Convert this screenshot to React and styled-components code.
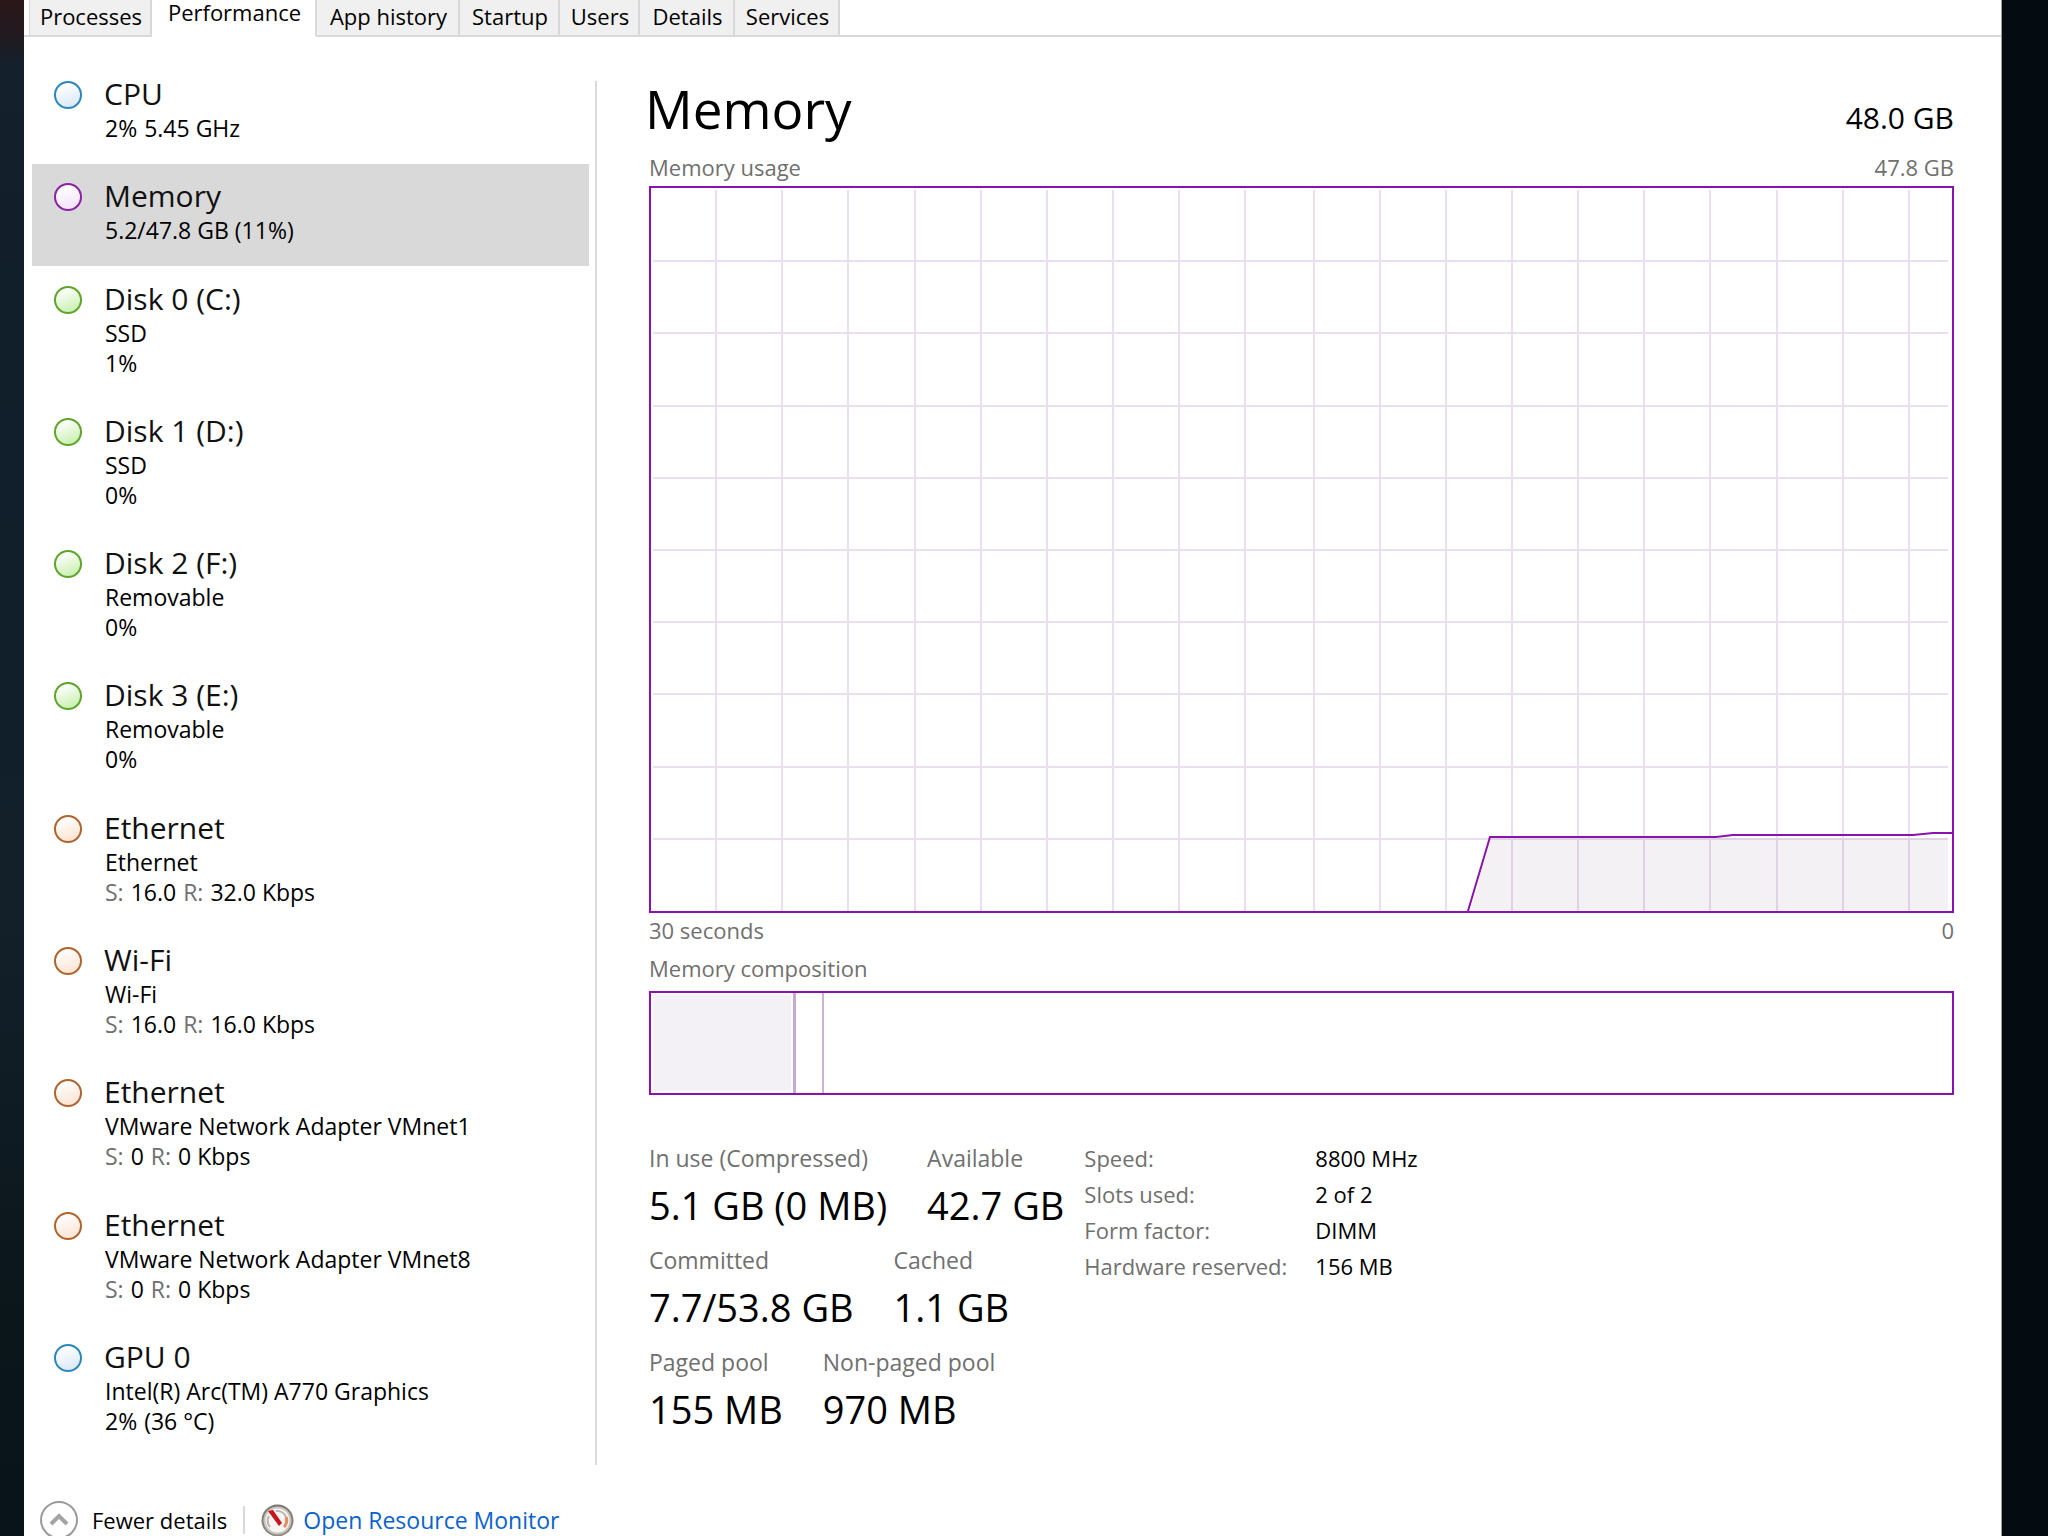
import React, { useState } from "react";
import styled, { createGlobalStyle } from "styled-components";

const GlobalStyle = createGlobalStyle`
  *, *::before, *::after { box-sizing: border-box; }
  body {
    margin: 0;
    font-family: "Open Sans", "Noto Sans", sans-serif;
    font-size: 23px;
    line-height: 30px;
    color: #000;
    background: #040c12;
  }
  button { font: inherit; color: inherit; border: 0; background: none; padding: 0; margin: 0; text-align: left; }
  h1, dl, dt, dd, p { margin: 0; font-weight: 400; }
`;

const PURPLE = "#8b12ae";

const Desktop = styled.div`
  min-height: 100vh;
  padding: 0 46px 0 24px;
  display: flex;
  overflow: hidden;
  background:
    linear-gradient(180deg, #2a1719 0, #221a20 34px, #14202b 64px, #101f2b 30%, #13202a 60%, #0b161b 85%, #08131a 100%) 0 0 / 24px 100% no-repeat,
    #040c12;
`;

const Window = styled.div`
  flex: 1;
  min-width: 0;
  display: flex;
  flex-direction: column;
  background: #fff;
  border-right: 1px solid #9a9d9f;
`;

const TabStrip = styled.div`
  height: 37px;
  padding-left: 5px;
  display: grid;
  grid-template-columns: 123px 165px 143px 100px 80px 95px 105px;
  align-items: start;
  flex: none;
  border-bottom: 2px solid #d9d9d9;
`;

const Tab = styled.button`
  display: flex;
  align-items: center;
  justify-content: center;
  white-space: nowrap;
  font-size: 22px;
  line-height: 24px;
  height: 36px;
  padding: 0 0 4px 2px;
  background: #f0f0f0;
  border-right: 2px solid #d9d9d9;
  border-bottom: 1px solid #d9d9d9;

  &:first-child {
    border-left: 1px solid #d9d9d9;
  }

  &[aria-selected="true"] {
    height: 37px;
    padding-bottom: 12px;
    background: #fff;
    border-bottom-color: #fff;
  }
`;

const Main = styled.div`
  flex: 1;
  display: flex;
  padding: 0 47px 0 8px;
`;

const DeviceList = styled.nav`
  flex: 0 0 557px;
  display: flex;
  flex-direction: column;
  justify-content: space-between;
  padding: 25px 0 8px;
`;

const DeviceItem = styled.button`
  display: flex;
  align-items: flex-start;
  gap: 22px;
  padding: 13px 22px 21px;
  background: ${(p) => (p.$selected ? "#d9d9d9" : "transparent")};
`;

const tones = {
  blue: ["#2b87bd", "#dbe9f6"],
  purple: ["#8e1fa8", "#f3e3f8"],
  green: ["#5da62b", "#c9f0b0"],
  orange: ["#b0642c", "#fbe4d3"],
};

const Dot = styled.span`
  flex: none;
  width: 28px;
  height: 28px;
  margin-top: 6px;
  border-radius: 50%;
  border: 2px solid ${(p) => tones[p.$tone][0]};
  background: linear-gradient(160deg, #fff 10%, ${(p) => tones[p.$tone][1]} 90%);
`;

const DeviceText = styled.span`
  display: flex;
  flex-direction: column;
`;

const DeviceName = styled.span`
  font-size: 30px;
  line-height: 38px;
  color: #111;
`;

const DeviceLine = styled.span`
  display: flex;
  gap: 7px;
  padding-left: 1px;
  white-space: nowrap;
`;

const Muted = styled.span`
  color: #707070;
`;

const Divider = styled.div`
  flex: 0 0 2px;
  margin: 44px 52px 0 6px;
  background: #dadada;
`;

const Panel = styled.main`
  flex: 1;
  min-width: 0;
  display: flex;
  flex-direction: column;
  padding: 40px 0 24px;
`;

const PanelHeader = styled.header`
  display: flex;
  justify-content: space-between;
  align-items: baseline;
  margin: 0 0 12px -4px;
`;

const PanelTitle = styled.h1`
  font-size: 53px;
  line-height: 64px;
`;

const Capacity = styled.span`
  font-size: 30px;
`;

const Caption = styled.div`
  display: flex;
  justify-content: space-between;
  margin: ${(p) => p.$margin};
  font-size: 22px;
  line-height: 28px;
  color: #707070;
`;

const ChartFrame = styled.div`
  flex: 1 0 400px;
  border: 2px solid ${PURPLE};
  display: flex;

  svg {
    flex: 1;
    width: 100%;
    height: auto;
    min-width: 0;
  }
`;

const Composition = styled.div`
  height: 104px;
  display: flex;
  border: 2px solid ${PURPLE};
`;

const InUseSegment = styled.div`
  padding: 2px;
  border-right: 3px solid #c7aad2;
  background: #f3f1f5 content-box;
`;

const ModifiedSegment = styled.div`
  flex: 0 0 28px;
  border-right: 2px solid #cdb3d6;
`;

const Details = styled.div`
  display: flex;
  align-items: flex-start;
  gap: 20px;
  margin-top: 48px;
`;

const Stats = styled.div`
  display: flex;
  flex-direction: column;
  gap: 8px;
`;

const StatRow = styled.dl`
  display: flex;
  gap: 40px;
`;

const StatLabel = styled.dt`
  color: #707070;
  white-space: nowrap;
`;

const StatValue = styled.dd`
  font-size: 38px;
  line-height: 64px;
  white-space: nowrap;
`;

const SpecTable = styled.table`
  border-collapse: collapse;
  white-space: nowrap;
  font-size: 22px;

  th {
    width: 231px;
    padding: 0 0 6px;
    font-weight: 400;
    text-align: left;
    color: #707070;
  }

  td {
    padding: 0 0 6px;
  }
`;

const Footer = styled.footer`
  flex: 0 0 71px;
  height: 71px;
  padding: 36px 16px 0;
  overflow: hidden;
  display: flex;
  align-items: flex-start;
`;

const FooterButton = styled.button`
  display: flex;
  align-items: center;
  gap: 14px;
  height: 38px;
  font-size: 22px;
`;

const FooterRule = styled.span`
  width: 2px;
  height: 28px;
  margin: 5px 16px 0;
  background: #d9d9d9;
`;

const FooterLink = styled.a`
  display: flex;
  align-items: center;
  gap: 9px;
  height: 38px;
  color: #0a63cf;
  text-decoration: none;
`;

const tabs = ["Processes", "Performance", "App history", "Startup", "Users", "Details", "Services"];

const traffic = (sent, received) => [
  <Muted key="s">S:</Muted>,
  <span key="sv">{sent}</span>,
  <Muted key="r">R:</Muted>,
  <span key="rv">{received} Kbps</span>,
];

const devices = [
  { name: "CPU", tone: "blue", lines: [[<span key="u">2%</span>, <span key="f">5.45 GHz</span>]] },
  { name: "Memory", tone: "purple", lines: ["5.2/47.8 GB (11%)"] },
  { name: "Disk 0 (C:)", tone: "green", lines: ["SSD", "1%"] },
  { name: "Disk 1 (D:)", tone: "green", lines: ["SSD", "0%"] },
  { name: "Disk 2 (F:)", tone: "green", lines: ["Removable", "0%"] },
  { name: "Disk 3 (E:)", tone: "green", lines: ["Removable", "0%"] },
  { name: "Ethernet", tone: "orange", lines: ["Ethernet", traffic("16.0", "32.0")] },
  { name: "Wi-Fi", tone: "orange", lines: ["Wi-Fi", traffic("16.0", "16.0")] },
  { name: "Ethernet", tone: "orange", lines: ["VMware Network Adapter VMnet1", traffic("0", "0")] },
  { name: "Ethernet", tone: "orange", lines: ["VMware Network Adapter VMnet8", traffic("0", "0")] },
  {
    name: "GPU 0",
    tone: "blue",
    lines: ["Intel(R) Arc(TM) A770 Graphics", [<span key="u">2%</span>, <span key="t">(36 °C)</span>]],
  },
];

const stats = [
  [["In use (Compressed)", "5.1 GB (0 MB)"], ["Available", "42.7 GB"]],
  [["Committed", "7.7/53.8 GB"], ["Cached", "1.1 GB"]],
  [["Paged pool", "155 MB"], ["Non-paged pool", "970 MB"]],
];

const specs = [
  ["Speed:", "8800 MHz"],
  ["Slots used:", "2 of 2"],
  ["Form factor:", "DIMM"],
  ["Hardware reserved:", "156 MB"],
];

const inUseShare = 0.1115;

function UsageChart() {
  const columns = Array.from({ length: 19 }, (_, i) => Math.round(66.15 * (i + 1)) - (i < 9 ? 2 : 0));
  const rows = Array.from({ length: 9 }, (_, i) => Math.round(72.2 * (i + 1)));
  return (
    <svg viewBox="0 0 1301 723" preserveAspectRatio="none" role="img" aria-label="Memory usage over 30 seconds">
      <g fill="#eadfef">
        {rows.map((y) => (
          <rect key={y} x="2" y={y} width="1295" height="2" />
        ))}
        {columns.map((x) => (
          <rect key={x} x={x} y="2" width="2" height="721" />
        ))}
      </g>
      <polygon points="820,722 840,650 1297,650 1297,722" fill="rgba(60,20,80,0.06)" />
      <polyline
        points="817,723 839,649 1065,649 1082,647 1262,647 1282,645 1301,645"
        fill="none"
        stroke={PURPLE}
        strokeWidth="2"
      />
    </svg>
  );
}

function ChevronCircle() {
  return (
    <svg width="38" height="38" viewBox="0 0 38 38" fill="none" aria-hidden="true">
      <circle cx="19" cy="19" r="18" stroke="#9a9a9a" strokeWidth="2" />
      <path d="M11 23 L19 15 L27 23" stroke="#a3a3a3" strokeWidth="4" />
    </svg>
  );
}

function GaugeIcon() {
  return (
    <svg width="33" height="33" viewBox="0 0 33 33" fill="none" aria-hidden="true">
      <defs>
        <linearGradient id="rim" x1="0" y1="0" x2="0" y2="1">
          <stop offset="0" stopColor="#77736f" />
          <stop offset="1" stopColor="#8f8b86" />
        </linearGradient>
      </defs>
      <circle cx="16.5" cy="16.5" r="16" fill="url(#rim)" />
      <circle cx="16.5" cy="16.5" r="14" fill="#c9c5bd" />
      <circle cx="16.5" cy="16.5" r="12" fill="#f7f5f2" />
      <path d="M9 23 A10 10 0 0 1 8 12" stroke="#b9b3ac" strokeWidth="2" />
      <path d="M15 7 A9.500 9.500 0 0 1 25 13" stroke="#b9b3ac" strokeWidth="2" />
      <path d="M25 13 A9.500 9.500 0 0 1 23 23" stroke="#e58a62" strokeWidth="3" />
      <path d="M7 7 L12 6 L21 19 L18 22 Z" fill="#c8141c" />
    </svg>
  );
}

export default function App() {
  const [tab, setTab] = useState("Performance");
  const [device, setDevice] = useState(1);

  return (
    <Desktop>
      <GlobalStyle />
      <Window>
        <TabStrip role="tablist">
          {tabs.map((t) => (
            <Tab key={t} role="tab" aria-selected={t === tab} onClick={() => setTab(t)}>
              {t}
            </Tab>
          ))}
        </TabStrip>

        <Main>
          <DeviceList aria-label="Devices">
            {devices.map((d, i) => (
              <DeviceItem key={i} $selected={i === device} onClick={() => setDevice(i)}>
                <Dot $tone={d.tone} />
                <DeviceText>
                  <DeviceName>{d.name}</DeviceName>
                  {d.lines.map((line, n) => (
                    <DeviceLine key={n}>{line}</DeviceLine>
                  ))}
                </DeviceText>
              </DeviceItem>
            ))}
          </DeviceList>
          <Divider />
          <Panel>
            <PanelHeader>
              <PanelTitle>Memory</PanelTitle>
              <Capacity>48.0 GB</Capacity>
            </PanelHeader>
            <Caption $margin="0 0 5px">
              <span>Memory usage</span>
              <span>47.8 GB</span>
            </Caption>
            <ChartFrame>
              <UsageChart />
            </ChartFrame>
            <Caption $margin="3px 0 10px">
              <span>30 seconds</span>
              <span>0</span>
            </Caption>
            <Caption $margin="0 0 9px">
              <span>Memory composition</span>
            </Caption>
            <Composition>
              <InUseSegment style={{ width: `${inUseShare * 100}%` }} />
              <ModifiedSegment />
            </Composition>
            <Details>
              <Stats>
                {stats.map((row) => (
                  <StatRow key={row[0][0]}>
                    {row.map(([label, value]) => (
                      <div key={label}>
                        <StatLabel>{label}</StatLabel>
                        <StatValue>{value}</StatValue>
                      </div>
                    ))}
                  </StatRow>
                ))}
              </Stats>
              <SpecTable>
                <tbody>
                  {specs.map(([label, value]) => (
                    <tr key={label}>
                      <th scope="row">{label}</th>
                      <td>{value}</td>
                    </tr>
                  ))}
                </tbody>
              </SpecTable>
            </Details>
          </Panel>
        </Main>

        <Footer>
          <FooterButton>
            <ChevronCircle />
            Fewer details
          </FooterButton>
          <FooterRule />
          <FooterLink href="#resource-monitor">
            <GaugeIcon />
            Open Resource Monitor
          </FooterLink>
        </Footer>
      </Window>
    </Desktop>
  );
}
